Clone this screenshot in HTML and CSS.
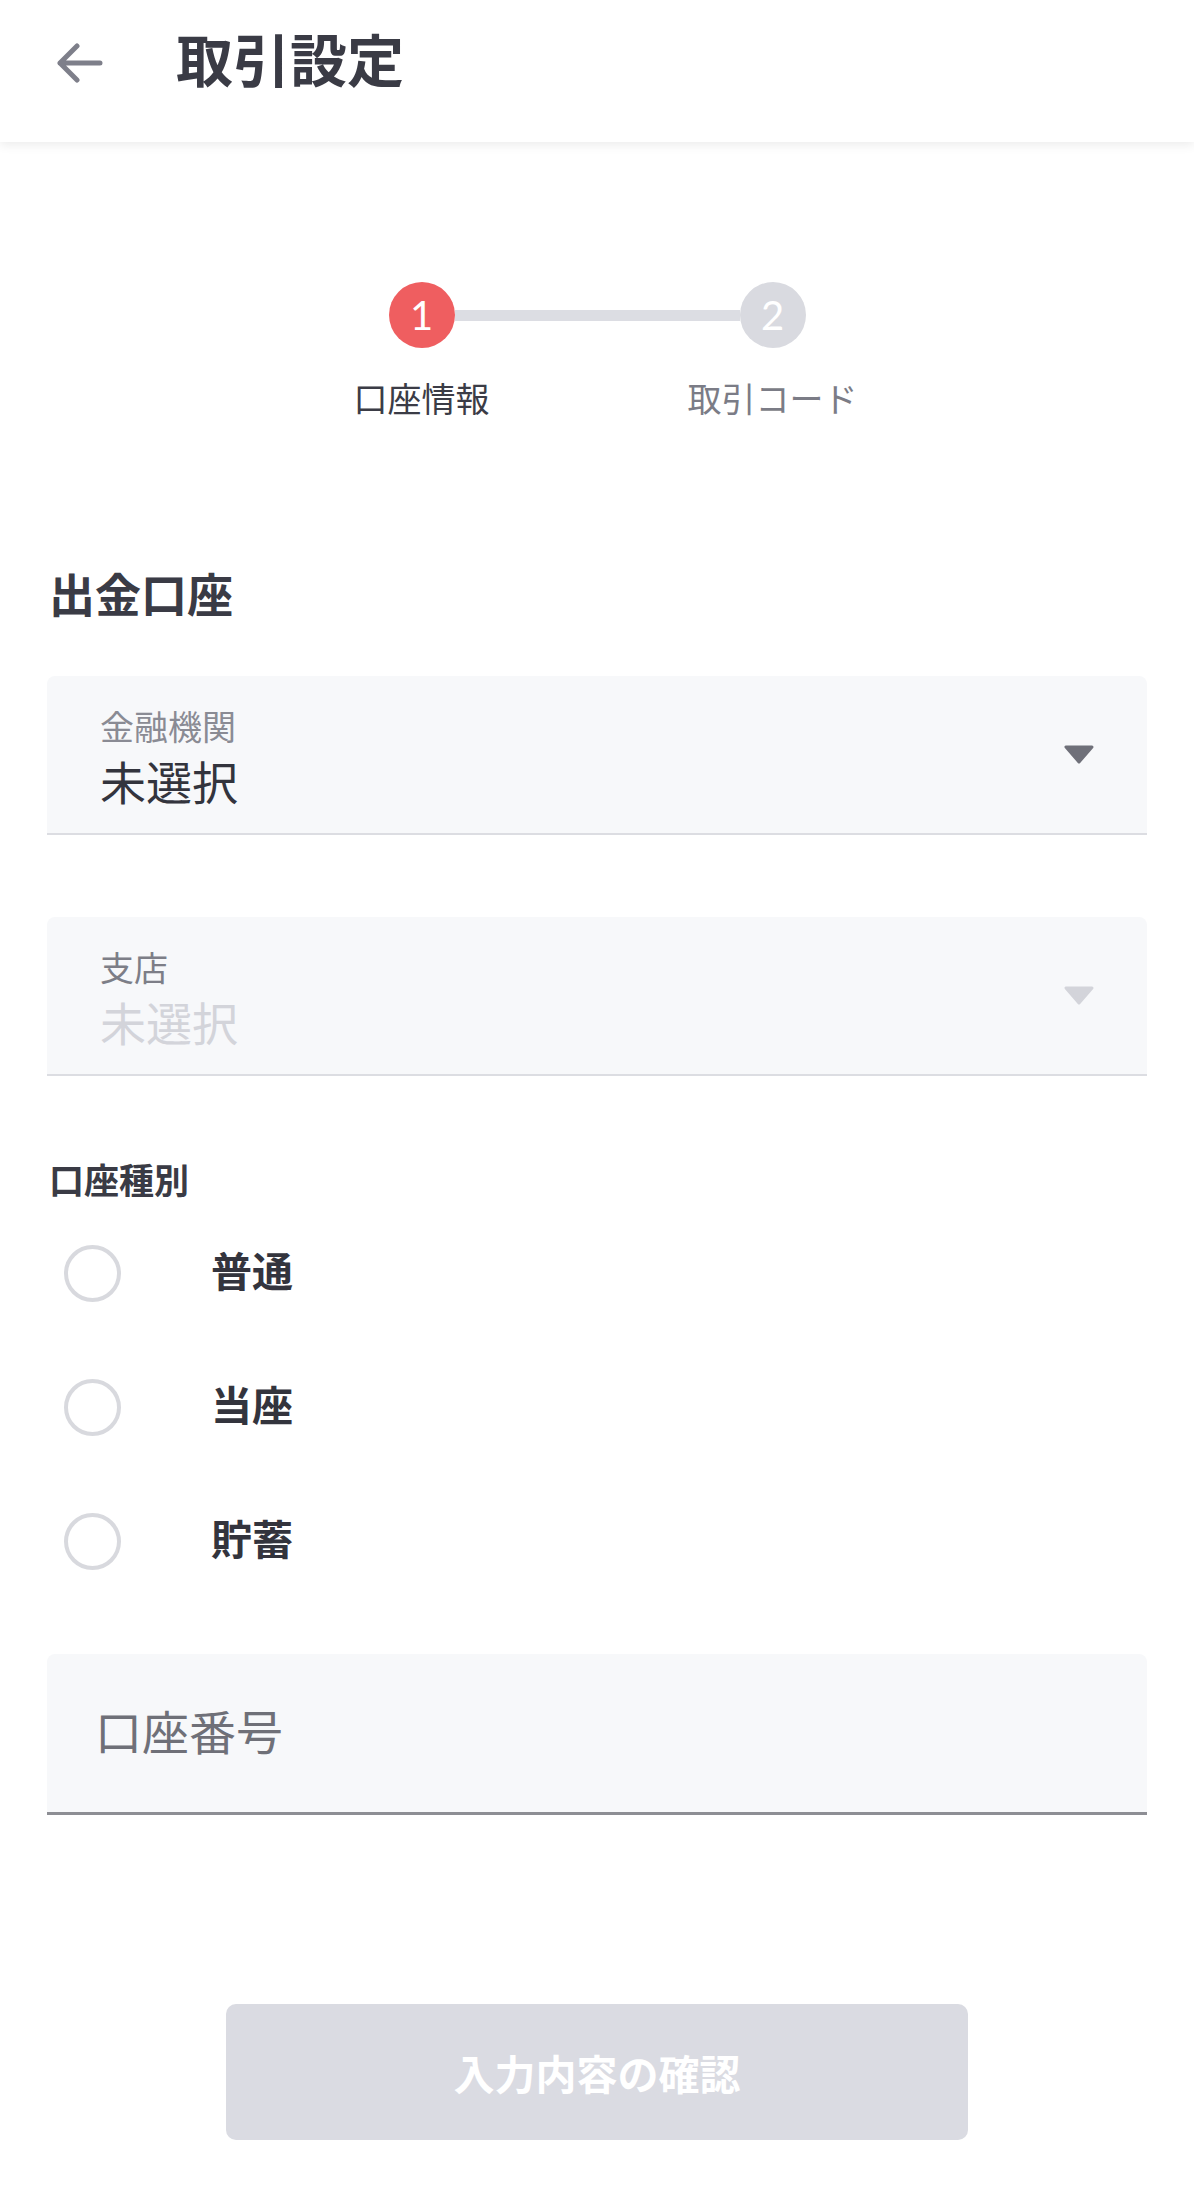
FILE: index.html
```html
<!DOCTYPE html>
<html lang="ja">
<head>
<meta charset="utf-8">
<title>取引設定</title>
<link rel="stylesheet" href="styles.css">
</head>
<body>
<header class="app-bar">
  <button class="back" type="button" aria-label="戻る">
    <svg viewBox="0 0 46 40" width="46" height="40"><path d="M3 20 H43 M20 3 L3 20 L20 37" fill="none" stroke="#7e7f8a" stroke-width="5" stroke-linecap="round" stroke-linejoin="round"/></svg>
  </button>
  <h1 class="title">取引設定</h1>
</header>
<main class="content">
  <div class="stepper">
    <div class="step-row">
      <span class="dot dot-active">1</span>
      <span class="bar"></span>
      <span class="dot">2</span>
    </div>
    <div class="step-row labels">
      <span class="step-label label-active"><span>口座情報</span></span>
      <span class="bar-space"></span>
      <span class="step-label"><span>取引コード</span></span>
    </div>
  </div>

  <h2 class="section-title">出金口座</h2>

  <div class="select-field">
    <div class="select-text">
      <div class="select-label">金融機関</div>
      <div class="select-value">未選択</div>
    </div>
    <svg class="caret" viewBox="0 0 32 20" width="32" height="20"><path d="M3 2 H29 L16 17 Z" fill="#6f7079" stroke="#6f7079" stroke-width="3" stroke-linejoin="round"/></svg>
  </div>

  <div class="select-field disabled">
    <div class="select-text">
      <div class="select-label">支店</div>
      <div class="select-value">未選択</div>
    </div>
    <svg class="caret" viewBox="0 0 32 20" width="32" height="20"><path d="M3 2 H29 L16 17 Z" fill="#d3d4da" stroke="#d3d4da" stroke-width="3" stroke-linejoin="round"/></svg>
  </div>

  <h3 class="group-title">口座種別</h3>
  <div class="radio-list">
    <label class="radio-row"><span class="radio"></span><span class="radio-text">普通</span></label>
    <label class="radio-row"><span class="radio"></span><span class="radio-text">当座</span></label>
    <label class="radio-row"><span class="radio"></span><span class="radio-text">貯蓄</span></label>
  </div>

  <input class="text-field" type="text" placeholder="口座番号">

  <button class="confirm" type="button">入力内容の確認</button>
</main>
</body>
</html>
```
FILE: styles.css
```css
html, body {
  margin: 0;
  padding: 0;
  background: #ffffff;
}
body {
  width: 1194px;
  min-height: 2190px;
  font-family: "Noto Sans CJK JP", "Noto Sans", sans-serif;
  color: #3b3c46;
}
.app-bar {
  box-sizing: border-box;
  height: 142px;
  display: flex;
  align-items: flex-start;
  padding: 29px 0 0 57px;
  background: #ffffff;
  box-shadow: 0 3px 10px rgba(0, 0, 0, 0.08);
  position: relative;
}
.back {
  margin: 14px 0 0 0;
  padding: 0;
  border: 0;
  background: none;
  width: 46px;
  height: 40px;
  display: block;
}
.back svg { display: block; }
.title {
  margin: 0 0 0 73px;
  font-size: 57px;
  line-height: 1;
  font-weight: 700;
  color: #3a3b45;
  letter-spacing: 0;
}
.content {
  padding: 0 47px;
  display: flex;
  flex-direction: column;
}
.stepper {
  margin-top: 140px;
  display: flex;
  flex-direction: column;
  align-items: center;
}
.step-row {
  display: flex;
  align-items: center;
}
.dot {
  width: 66px;
  height: 66px;
  border-radius: 50%;
  background: #d9dae0;
  color: #ffffff;
  font-family: "Lato", "Noto Sans", sans-serif;
  font-weight: 400;
  font-size: 40px;
  line-height: 66px;
  text-align: center;
  flex: none;
}
.dot-active { background: #ef5e60; }
.bar {
  width: 285px;
  height: 11px;
  background: #dcdde3;
  flex: none;
}
.labels { margin-top: 33px; }
.step-label {
  width: 66px;
  display: flex;
  justify-content: center;
  white-space: nowrap;
  font-size: 34px;
  line-height: 1;
  color: #7b7c86;
  flex: none;
}
.label-active { color: #3b3c46; }
.bar-space { width: 285px; flex: none; }
.section-title {
  margin: 154px 0 0 2px;
  font-size: 46px;
  line-height: 1;
  font-weight: 700;
  color: #3a3b45;
}
.select-field {
  box-sizing: border-box;
  margin-top: 61px;
  height: 159px;
  display: flex;
  align-items: center;
  justify-content: space-between;
  padding: 0 52px 0 53px;
  background: #f7f8fa;
  border-bottom: 2px solid #dcdde2;
  border-radius: 8px 8px 0 0;
}
.select-field.disabled { margin-top: 82px; }
.select-text {
  display: flex;
  flex-direction: column;
  padding-top: 2px;
}
.select-label {
  font-size: 34px;
  line-height: 1;
  color: #8a8b94;
}
.select-value {
  margin-top: 14px;
  font-size: 46px;
  line-height: 1;
  color: #33343d;
}
.disabled .select-label { color: #7d7e87; }
.disabled .select-value { color: #d3d4da; }
.caret { display: block; }
.group-title {
  margin: 85px 0 0 2px;
  font-size: 35px;
  line-height: 1;
  font-weight: 700;
  color: #3a3b45;
}
.radio-list {
  margin-top: 49px;
  display: flex;
  flex-direction: column;
  gap: 78px;
}
.radio-row {
  height: 56px;
  display: flex;
  align-items: center;
  padding-left: 17px;
}
.radio {
  box-sizing: border-box;
  width: 57px;
  height: 57px;
  border-radius: 50%;
  border: 4px solid #d8d9de;
  flex: none;
}
.radio-text {
  margin-left: 90px;
  font-size: 41px;
  line-height: 1;
  font-weight: 700;
  color: #33343d;
  padding-bottom: 8px;
}
.text-field {
  box-sizing: border-box;
  margin-top: 85px;
  width: 100%;
  height: 161px;
  padding: 0 48px 8px;
  border: 0;
  border-bottom: 3px solid #8d8e94;
  border-radius: 8px 8px 0 0;
  background: #f7f8fa;
  font-family: "Noto Sans CJK JP", "Noto Sans", sans-serif;
  font-size: 47px;
  color: #33343d;
  outline: none;
}
.text-field::placeholder { color: #6f7078; opacity: 1; }
.confirm {
  align-self: center;
  margin-top: 189px;
  width: 742px;
  height: 136px;
  border: 0;
  border-radius: 10px;
  background: #dadbe2;
  color: #ffffff;
  font-family: "Noto Sans CJK JP", "Noto Sans", sans-serif;
  font-size: 41px;
  font-weight: 700;
  padding: 0;
}
```
